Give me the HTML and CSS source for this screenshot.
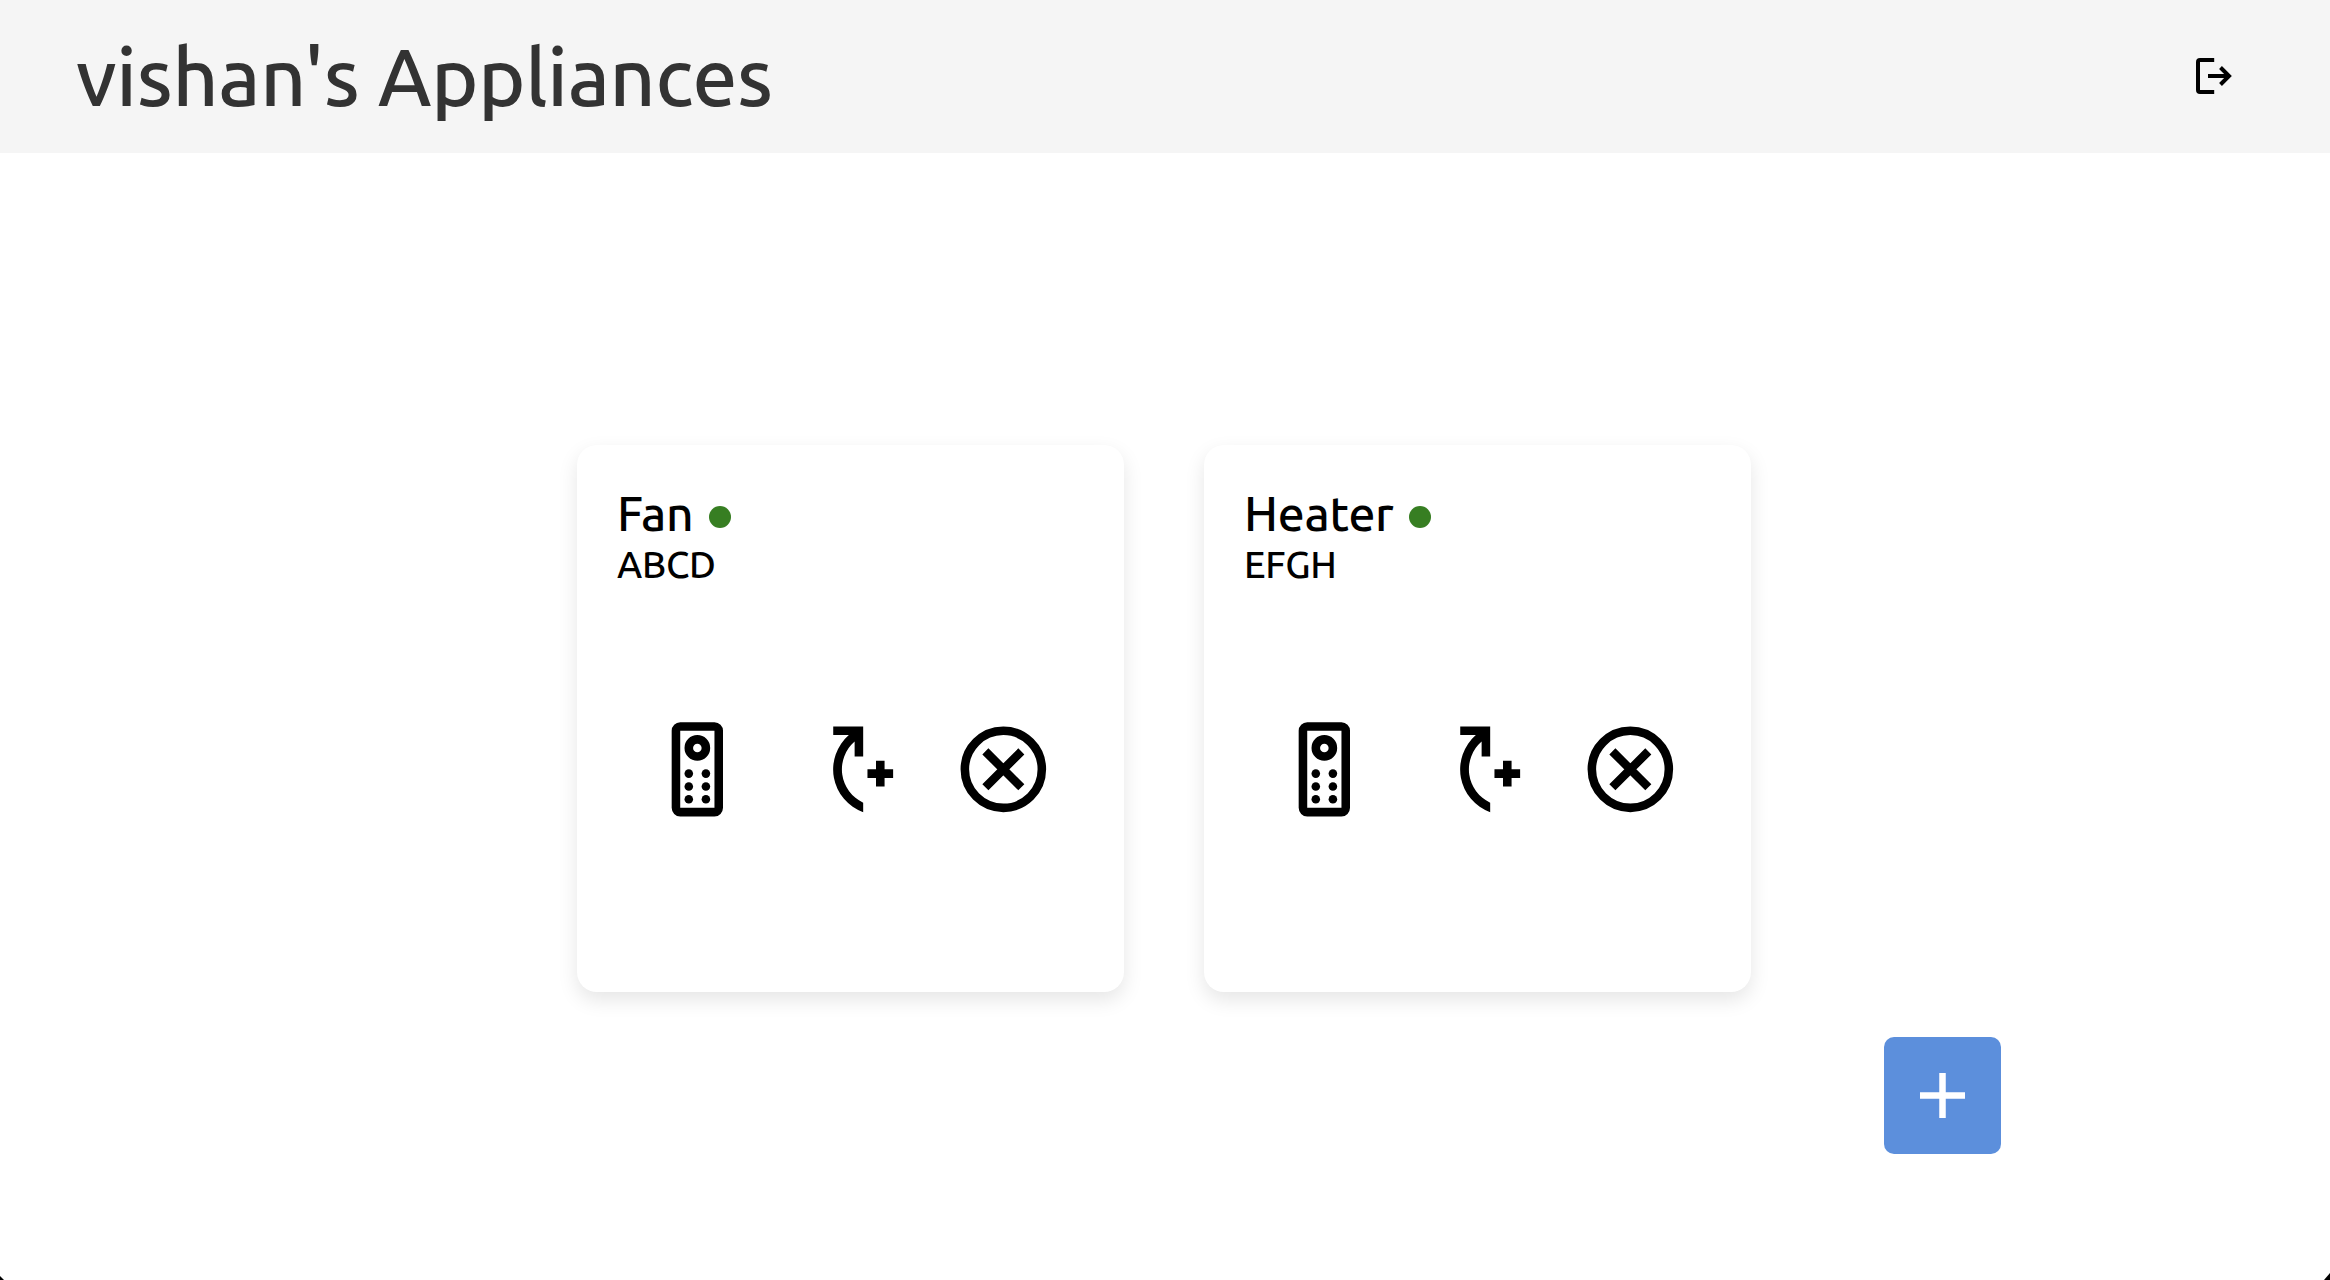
FILE: index.html
```html
<!DOCTYPE html>
<html lang="en">
<head>
<meta charset="utf-8">
<title>Appliances</title>
<link rel="stylesheet" href="styles.css">
</head>
<body>
<svg class="sprite" aria-hidden="true">
  <symbol id="remote" viewBox="0 0 24 24">
    <path fill-rule="evenodd" d="M8 1h8a2 2 0 0 1 2 2v18a2 2 0 0 1-2 2H8a2 2 0 0 1-2-2V3a2 2 0 0 1 2-2zM8 3v18h8V3z"/>
    <circle cx="12" cy="7" r="2" fill="none" stroke="currentColor" stroke-width="2"/>
    <circle cx="10" cy="13" r="1"/><circle cx="14" cy="13" r="1"/>
    <circle cx="10" cy="16" r="1"/><circle cx="14" cy="16" r="1"/>
    <circle cx="10" cy="19" r="1"/><circle cx="14" cy="19" r="1"/>
  </symbol>
  <symbol id="rotate-add" viewBox="0 0 24 24">
    <path d="M15 9h-2V5.5A8.6 8.6 0 0 0 15 19.8V22A10.6 10.6 0 0 1 11.65 4H8V2h7zM18 10h2v2h2v2h-2v2h-2v-2h-2v-2h2z"/>
  </symbol>
  <symbol id="remove" viewBox="0 0 24 24">
    <g fill="none" stroke="currentColor" stroke-width="2">
      <circle cx="12" cy="12" r="9"/>
      <path d="M7.8 7.8l8.4 8.4M16.2 7.8l-8.4 8.4"/>
    </g>
  </symbol>
</svg>

<header class="header">
  <h1 class="title">vishan's Appliances</h1>
  <button class="logout" aria-label="Log out">
    <svg viewBox="0 0 36 36" fill="none" stroke="currentColor" stroke-width="4">
      <path d="M18.2 2H4Q2 2 2 4v28q0 2 2 2h14.2M12 18h21M24.5 9.5l8.5 8.5-8.5 8.5"/>
    </svg>
  </button>
</header>

<main class="appliances">
  <article class="card">
    <h2 class="name">Fan<span class="status"></span></h2>
    <p class="code">ABCD</p>
    <div class="actions">
      <svg><use href="#remote"/></svg>
      <svg><use href="#rotate-add"/></svg>
      <svg><use href="#remove"/></svg>
    </div>
  </article>
  <article class="card">
    <h2 class="name">Heater<span class="status"></span></h2>
    <p class="code">EFGH</p>
    <div class="actions">
      <svg><use href="#remote"/></svg>
      <svg><use href="#rotate-add"/></svg>
      <svg><use href="#remove"/></svg>
    </div>
  </article>
</main>

<button class="add" aria-label="Add appliance">
  <svg viewBox="0 0 45 45" fill="none" stroke="currentColor" stroke-width="6.5"><path d="M0 22.5h45M22.5 0v45"/></svg>
</button>
<i class="corner corner-left"></i>
<i class="corner corner-right"></i>
</body>
</html>
```
FILE: styles.css
```css
* { box-sizing: border-box; }
body {
  margin: 0;
  height: 1280px;
  overflow: hidden;
  background: #fff;
  color: #000;
  font-family: Ubuntu, "Noto Sans", sans-serif;
  font-weight: 500;
}
button { padding: 0; border: 0; background: none; color: inherit; }
svg { display: block; }
.sprite { position: absolute; width: 0; height: 0; }
.header {
  display: flex;
  align-items: center;
  justify-content: space-between;
  height: 153px;
  padding: 0 98.5px 0 76px;
  background: #f5f5f5;
}
.title {
  margin: 0;
  color: #333;
  font-size: 80px;
  font-weight: 500;
  line-height: 153px;
  letter-spacing: -0.3px;
  white-space: nowrap;
}
.logout { padding-bottom: 1px; }
.logout svg { width: 36px; height: 36px; }
.appliances {
  display: flex;
  gap: 80px;
  padding: 292px 0 0 577px;
}
.card {
  width: 547px;
  height: 547px;
  padding: 38px 40px 40px;
  border-radius: 20px;
  background: #fff;
  box-shadow: 0 8px 20px rgba(0, 0, 0, .1);
}
.name {
  display: flex;
  align-items: center;
  gap: 15px;
  height: 60px;
  margin: 0;
  font-size: 48px;
  font-weight: 500;
  line-height: 60px;
  letter-spacing: -0.3px;
}
.status {
  width: 22px;
  height: 22px;
  margin-top: 7px;
  border-radius: 50%;
  background: #377e22;
}
.code {
  height: 42px;
  margin: 0;
  font-size: 37.5px;
  line-height: 42px;
  letter-spacing: -0.3px;
}
.actions {
  display: flex;
  gap: 50.5px;
  padding: 133px 0 0 29px;
}
.actions svg { width: 102.7px; height: 102.7px; flex: none; fill: currentColor; }
.add {
  position: absolute;
  left: 1884px;
  top: 1037px;
  display: grid;
  place-items: center;
  width: 117px;
  height: 117px;
  border-radius: 10px;
  background: #5c8fdc;
  color: #fff;
}
.add svg { width: 45px; height: 45px; }
.corner { position: absolute; bottom: 0; background: #000; }
.corner-left { left: 0; width: 4px; height: 4px; clip-path: polygon(0 0, 100% 100%, 0 100%); }
.corner-right { right: 0; width: 6px; height: 7px; clip-path: polygon(100% 0, 100% 100%, 0 100%); }
```
